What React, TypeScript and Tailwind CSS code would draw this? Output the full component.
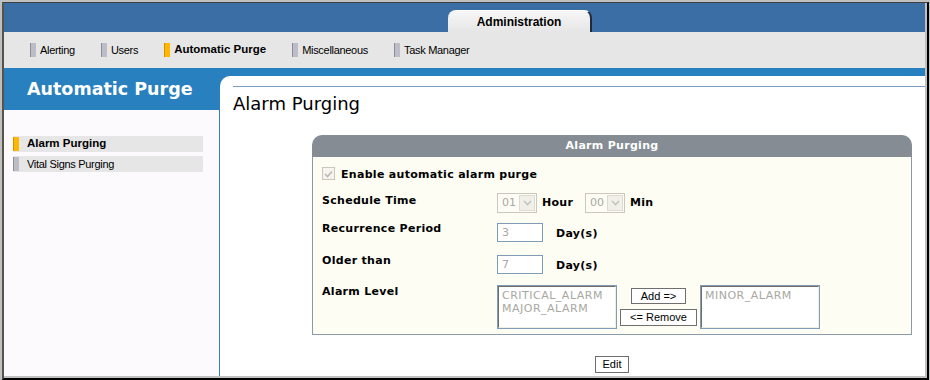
import { ReactNode } from 'react';

const tahoma = "font-['Liberation_Sans',Arial,sans-serif]";
const verdana = "font-['DejaVu_Sans',Verdana,sans-serif]";

function NavItem({ label, active }: { label: string; active?: boolean }) {
    return (
        <div className="flex items-center gap-[4px]">
            <span
                className={
                    active
                        ? 'w-[6px] h-[14px] bg-[#ffb700] border-l border-[#d98f00]'
                        : 'w-[6px] h-[14px] bg-[#bdbdc7] border-l border-[#8d8d99]'
                }
            />
            <span
                className={
                    active
                        ? 'text-[11.5px] font-bold text-black'
                        : 'text-[11px] text-black tracking-[-0.3px]'
                }
            >
                {label}
            </span>
        </div>
    );
}

function SideItem({ label, active }: { label: string; active?: boolean }) {
    return (
        <div className="w-[190px] h-[16px] bg-[#e6e6e6] flex items-center">
            <span
                className={
                    active
                        ? 'w-[6px] h-[14px] bg-[#ffb700] border-l border-[#d98f00]'
                        : 'w-[6px] h-[14px] bg-[#bdbdc7] border-l border-[#8d8d99]'
                }
            />
            <span
                className={
                    active
                        ? 'ml-[8px] text-[11.5px] font-bold text-black'
                        : 'ml-[8px] text-[11px] text-black tracking-[-0.3px]'
                }
            >
                {label}
            </span>
        </div>
    );
}

function Select({ value }: { value: string }) {
    return (
        <div className="w-[40px] h-[20px] border border-[#cbc8bc] bg-[#fdfdf6] flex items-center justify-between pl-[4px] pr-[1px]">
            <span className={`${verdana} text-[11px] font-normal tracking-normal text-[#a8a8a0]`}>{value}</span>
            <span className="w-[16px] h-[16px] bg-[#f1f0e8] border border-[#dedcd2] flex items-center justify-center">
                <svg width="9" height="6" viewBox="0 0 9 6">
                    <path d="M1 1 L4.5 4.5 L8 1" stroke="#c4c4c4" strokeWidth="1.6" fill="none" />
                </svg>
            </span>
        </div>
    );
}

function TextBox({ value }: { value: string }) {
    return (
        <div className={`${verdana} w-[46px] h-[19px] border border-[#7f9db9] bg-white pl-[4px] text-[11px] font-normal tracking-normal leading-[17px] text-[#a8a8a0]`}>
            {value}
        </div>
    );
}

function ListBox({ items }: { items: string[] }) {
    return (
        <div className="w-[120px] h-[44px] border border-[#7f9db9] bg-white">
            <div className="w-full h-full border-t border-l border-[#716f64] border-r border-b border-r-[#f1efe2] border-b-[#f1efe2] pl-[3px] pt-[2px]">
                {items.map((item) => (
                    <div key={item} className={`${verdana} text-[11px] font-normal leading-[13px] tracking-[0.5px] text-[#a8a8a0]`}>
                        {item}
                    </div>
                ))}
            </div>
        </div>
    );
}

function Btn({ children, className }: { children: ReactNode; className: string }) {
    return (
        <div className={`${tahoma} ${className} border border-[#6f6f6f] bg-white flex items-center justify-center text-[11px] text-black`}>
            {children}
        </div>
    );
}

function Label({ children }: { children: ReactNode }) {
    return <div className="w-[175px] shrink-0 leading-[14px] pt-[1px]">{children}</div>;
}

export default function App() {
    return (
        <div className={`${tahoma} w-[930px] h-[380px] bg-[#c0c0c0] pt-[2px] pl-[2px] pr-[1px] flex flex-col`}>
            <div className="flex-1 flex flex-col border-t border-t-[#404040] border-l-2 border-l-[#55534c] border-r-2 border-r-black border-b-2 border-b-black">
                <div className="flex-1 flex flex-col border-r-2 border-b-2 border-[#c0c0c0] overflow-hidden">
                    {/* top bar with tab */}
                    <div className="h-[29px] bg-[#3a6ea5] flex items-end">
                        <div className="ml-[444px] w-[144px] h-[22px] rounded-t-[8px] bg-gradient-to-b from-[#f6f6f6] to-[#e6e6e6] border-t border-t-white border-r-2 border-r-[#1f2b38] flex items-center justify-center">
                            <span className="text-[12px] font-bold text-black">Administration</span>
                        </div>
                    </div>

                    {/* nav */}
                    <div className="h-[36px] bg-[#e6e6e6] flex items-center pl-[26px] gap-[26px]">
                        <NavItem label="Alerting" />
                        <NavItem label="Users" />
                        <NavItem label="Automatic Purge" active />
                        <NavItem label="Miscellaneous" />
                        <NavItem label="Task Manager" />
                    </div>

                    {/* main */}
                    <div className="flex-1 flex bg-[#2980bf]">
                        <div className="w-[216px] flex flex-col">
                            <div className="h-[42px] flex items-center pl-[23px]">
                                <span className={`${verdana} text-[17.5px] font-bold text-white`}>Automatic Purge</span>
                            </div>
                            <div className="flex-1 bg-[#fdfafd] border-r border-[#3a7ab8] pt-[26px] pl-[9px] flex flex-col gap-[4px]">
                                <SideItem label="Alarm Purging" active />
                                <SideItem label="Vital Signs Purging" />
                            </div>
                        </div>

                        <div className="flex-1 pt-[8px] flex flex-col">
                            <div className="flex-1 bg-white rounded-tl-[10px] flex flex-col">
                                <div className="mt-[10px] ml-[13px] border-t border-[#7b9cc0]" />
                                <div className={`${verdana} mt-[6px] ml-[13px] text-[18px] leading-[22px] text-black`}>
                                    Alarm Purging
                                </div>

                                <div className={`${verdana} mt-[20px] ml-[92px] w-[600px] text-[11px] font-bold tracking-[0.3px] text-black`}>
                                    <div className="h-[22px] rounded-t-[10px] bg-[#858c93] flex items-center justify-center text-white">
                                        Alarm Purging
                                    </div>
                                    <div className="bg-[#fdfdf3] border-x border-b border-[#8b9aa9] pl-[9px] pt-[10px] pb-[5px]">
                                        <div className="h-[13px] flex items-center gap-[6px]">
                                            <span className="w-[13px] h-[13px] border border-[#c9c7ba] bg-[#f5f4ee] flex items-center justify-center">
                                                <svg width="9" height="8" viewBox="0 0 9 8">
                                                    <path d="M1 4 L3.5 6.5 L8 1.5" stroke="#b8b8b8" strokeWidth="1.6" fill="none" />
                                                </svg>
                                            </span>
                                            <span className="leading-[14px] pt-[2px]">Enable automatic alarm purge</span>
                                        </div>

                                        <div className="mt-[13px] flex">
                                            <Label>Schedule Time</Label>
                                            <div className="flex items-center">
                                                <Select value="01" />
                                                <span className="ml-[5px] w-[43px]">Hour</span>
                                                <Select value="00" />
                                                <span className="ml-[5px]">Min</span>
                                            </div>
                                        </div>

                                        <div className="mt-[8px] flex">
                                            <Label>Recurrence Period</Label>
                                            <div className="mt-[2px] flex items-center">
                                                <TextBox value="3" />
                                                <span className="ml-[13px] pt-[3px]">Day(s)</span>
                                            </div>
                                        </div>

                                        <div className="mt-[10px] flex">
                                            <Label>Older than</Label>
                                            <div className="mt-[2px] flex items-center">
                                                <TextBox value="7" />
                                                <span className="ml-[13px] pt-[3px]">Day(s)</span>
                                            </div>
                                        </div>

                                        <div className="mt-[10px] flex">
                                            <Label>Alarm Level</Label>
                                            <div className="mt-[1px] flex">
                                                <ListBox items={['CRITICAL_ALARM', 'MAJOR_ALARM']} />
                                                <div className="w-[83px] flex flex-col items-center pt-[3px] gap-[5px] font-normal tracking-normal">
                                                    <Btn className="w-[55px] h-[16px]">Add =&gt;</Btn>
                                                    <Btn className="w-[77px] h-[17px]">&lt;= Remove</Btn>
                                                </div>
                                                <ListBox items={['MINOR_ALARM']} />
                                            </div>
                                        </div>
                                    </div>

                                    <div className="mt-[21px] flex justify-center font-normal tracking-normal">
                                        <Btn className="w-[34px] h-[17px]">Edit</Btn>
                                    </div>
                                </div>
                            </div>
                        </div>
                    </div>
                </div>
            </div>
        </div>
    );
}
